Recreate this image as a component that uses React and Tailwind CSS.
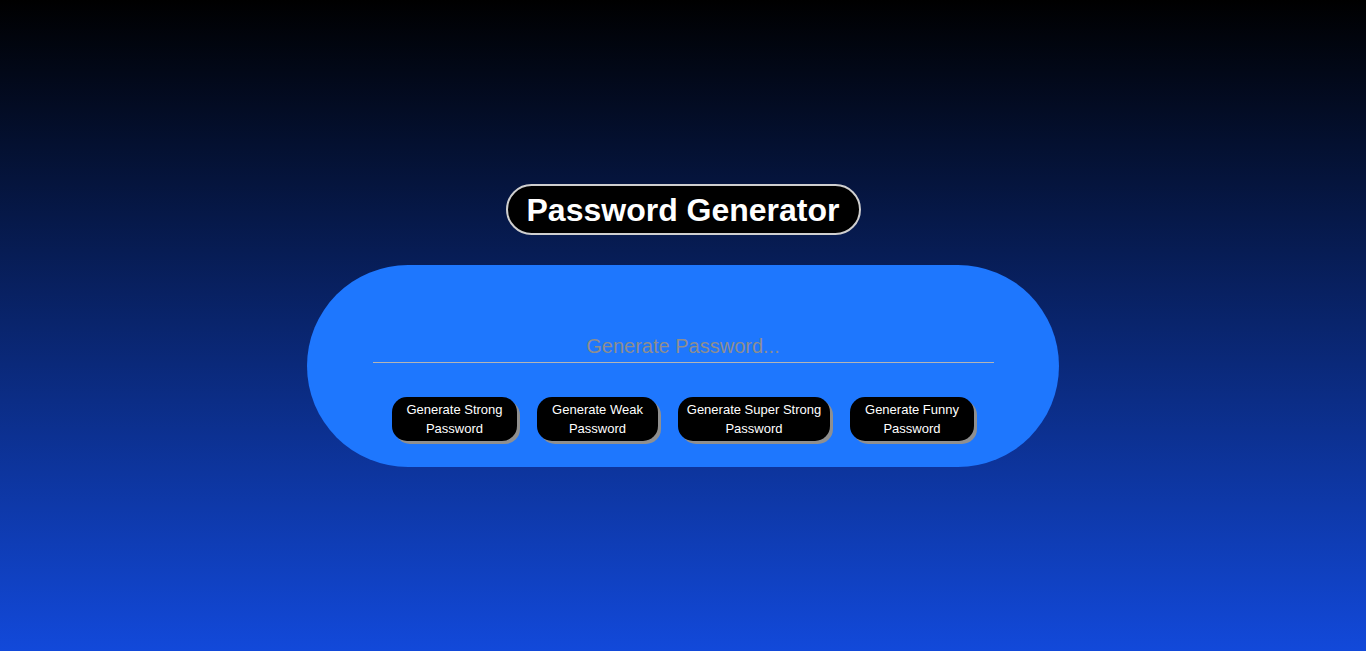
import React from "react";

const buttons = [
	{ label: "Generate Strong Password", width: "w-[125px]" },
	{ label: "Generate Weak Password", width: "w-[121px]" },
	{ label: "Generate Super Strong Password", width: "w-[152px]" },
	{ label: "Generate Funny Password", width: "w-[124px]" }
];

const App = () => {
	return (
		<div
			className="h-[651px] w-full flex flex-col items-center justify-center bg-[linear-gradient(to_bottom,#000000,#1249da)]"
			style={{ fontFamily: '"Liberation Sans", Arial, sans-serif' }}
		>
			<h1 className="h-[51px] flex items-center px-[19px] rounded-full bg-black border-2 border-[#cfcfcf] text-white text-[32px] font-bold leading-none">
				Password Generator
			</h1>

			<div className="mt-[30px] w-[752px] h-[202px] rounded-[101px] bg-[#1e77fe] flex flex-col items-center pt-[65px]">
				<input
					type="text"
					readOnly
					placeholder="Generate Password..."
					className="w-[621px] h-[33px] bg-transparent border-b border-[#b4b4b4] text-center text-[20px] text-white placeholder:text-[#8e8e8e] outline-none"
				/>

				<div className="mt-[34px] flex gap-[20px]">
					{buttons.map((btn) => (
						<button
							key={btn.label}
							className={`${btn.width} h-[44px] rounded-[15px] bg-black text-white text-[13px] font-medium leading-[19px] shadow-[3px_3px_0_#8f8f8f] px-[6px]`}
						>
							{btn.label}
						</button>
					))}
				</div>
			</div>
		</div>
	);
};

export default App;
